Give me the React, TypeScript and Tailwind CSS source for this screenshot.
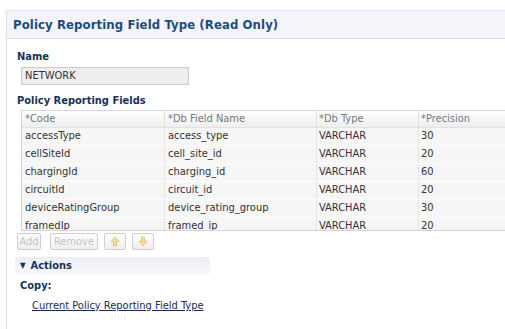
import React from "react";

const ROWS = [
  { code: "accessType", name: "access_type", type: "VARCHAR", precision: "30" },
  { code: "cellSiteId", name: "cell_site_id", type: "VARCHAR", precision: "20" },
  { code: "chargingId", name: "charging_id", type: "VARCHAR", precision: "60" },
  { code: "circuitId", name: "circuit_id", type: "VARCHAR", precision: "20" },
  { code: "deviceRatingGroup", name: "device_rating_group", type: "VARCHAR", precision: "30" },
  { code: "framedIp", name: "framed_ip", type: "VARCHAR", precision: "20" },
];

const FONT = "font-['DejaVu_Sans_Condensed','DejaVu_Sans',sans-serif]";

function Arrow({ down }: { down?: boolean }) {
  return (
    <svg width="10" height="11" viewBox="0 0 10 11" className={down ? "rotate-180" : ""}>
      <path d="M5 1 L9 5.5 H6.5 V10 H3.5 V5.5 H1 Z" fill="#f6dc9a" stroke="#e7bf6a" strokeWidth="0.8" />
    </svg>
  );
}

export default function App() {
  return (
    <div className={`w-[505px] h-[329px] bg-white overflow-hidden pt-[10px] pl-[6px] ${FONT} text-[11px] text-[#333]`}>
      <div className="h-full border-l border-t border-[#e1e2e8]">
        {/* Title band */}
        <div className="h-[28px] flex items-center pl-[6px] bg-[#f3f5fb] border-b border-[#d9dbe5]">
          <h1 className="text-[13px] font-bold text-[#1d4c7c] tracking-[0.1px]">Policy Reporting Field Type (Read Only)</h1>
        </div>

        <div className="pl-[10px] pt-[11px]">
          <div className="font-bold text-[#15325a] leading-[14px]">Name</div>
          <div className="ml-[4px] mt-[3px] w-[168px] h-[18px] bg-[#eeeeee] border border-[#cacaca] flex items-center pl-[3px] text-[#333]">
            NETWORK
          </div>
          <div className="mt-[9px] font-bold text-[#15325a] leading-[14px]">Policy Reporting Fields</div>

          {/* Table */}
          <div className="ml-[4px] mt-[2px] h-[121px] overflow-hidden border border-[#d4d4d4] border-r-0">
            <div className="grid grid-cols-[142px_152px_102px_1fr] h-[17px] items-center bg-gradient-to-b from-white to-[#eeeeee] border-b border-[#e2e2e2] text-[#777]">
              <div className="pl-[3px]">*Code</div>
              <div className="pl-[3px] border-l border-[#dddddd] h-full flex items-center">*Db Field Name</div>
              <div className="pl-[2px] border-l border-[#dddddd] h-full flex items-center">*Db Type</div>
              <div className="pl-[2px] border-l border-[#dddddd] h-full flex items-center">*Precision</div>
            </div>
            {ROWS.map((r) => (
              <div key={r.code} className="grid grid-cols-[142px_152px_102px_1fr] h-[18px] items-center bg-[#f6f6f6] border-b border-[#fbfbfb]">
                <div className="pl-[3px]">{r.code}</div>
                <div className="pl-[3px] border-l border-[#e4e4e4] h-full flex items-center">{r.name}</div>
                <div className="pl-[2px] border-l border-[#e4e4e4] h-full flex items-center">{r.type}</div>
                <div className="pl-[2px] border-l border-[#e4e4e4] h-full flex items-center">{r.precision}</div>
              </div>
            ))}
          </div>

          {/* Buttons */}
          <div className="mt-[2px] flex gap-[6px] text-[#c4c4c4]">
            <button className="h-[17px] w-[24px] border border-[#cfcfcf] rounded-[2px] bg-gradient-to-b from-white to-[#eeeeee] leading-none">Add</button>
            <button className="ml-[3px] h-[17px] w-[48px] border border-[#cfcfcf] rounded-[2px] bg-gradient-to-b from-white to-[#eeeeee] leading-none">Remove</button>
            <button className="h-[17px] w-[22px] border border-[#cfcfcf] rounded-[2px] bg-gradient-to-b from-white to-[#eeeeee] flex items-center justify-center">
              <Arrow />
            </button>
            <button className="h-[17px] w-[22px] border border-[#cfcfcf] rounded-[2px] bg-gradient-to-b from-white to-[#eeeeee] flex items-center justify-center">
              <Arrow down />
            </button>
          </div>

          {/* Actions */}
          <div className="-ml-[2px] mt-[7px] w-[195px] h-[18px] rounded-t-[4px] bg-gradient-to-b from-[#eceef5] to-[#f8f9fc] flex items-center pl-[5px] font-bold text-[#15325a]">
            <span className="text-[8px] mr-[5px]">▼</span>
            Actions
          </div>
          <div className="mt-[4px] pl-[3px] font-bold text-[#15325a] leading-[14px]">Copy:</div>
          <div className="mt-[6px] pl-[15px] leading-[14px]">
            <a className="underline text-[#1a2d55]">Current Policy Reporting Field Type</a>
          </div>
        </div>
      </div>
    </div>
  );
}
